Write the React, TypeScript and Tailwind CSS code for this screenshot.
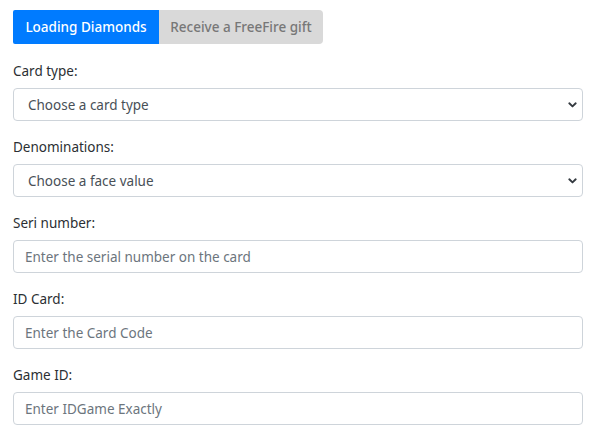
import React from "react";

const Chevron = () => (
  <svg width="9" height="7" viewBox="0 0 9 7" className="absolute right-[5px] top-1/2 -translate-y-1/2">
    <path d="M1.3 1.8 L4.5 4.9 L7.7 1.8" fill="none" stroke="#343a40" strokeWidth="1.9" strokeLinecap="round" strokeLinejoin="round" />
  </svg>
);

const SelectBox = ({ text }: { text: string }) => (
  <div className="relative h-[33px] w-full rounded-[4px] border border-[#ced4da] bg-white flex items-center pl-[14px] pt-[2px] text-[13.5px] text-[#495057]">
    {text}
    <Chevron />
  </div>
);

const InputBox = ({ text }: { text: string }) => (
  <div className="h-[33px] w-full rounded-[4px] border border-[#ced4da] bg-white flex items-center pl-[11px] pt-[2px] text-[13.5px] text-[#6c757d]">
    {text}
  </div>
);

const Group = ({ label, children }: { label: string; children: React.ReactNode }) => (
  <div className="mb-[15px]">
    <div className="h-[22px] leading-[22px] mb-[6px] text-[13.5px] text-[#2b2f33]">{label}</div>
    {children}
  </div>
);

export default function App() {
  return (
    <div
      className="w-[600px] h-[435px] bg-white overflow-hidden pl-[13px] pr-[17px] pt-[10px]"
      style={{ fontFamily: '"Noto Sans", "Open Sans", sans-serif' }}
    >
      <div className="flex mb-[16px]">
        <div className="w-[146px] h-[34px] bg-[#007bff] text-white flex items-center justify-center text-[13.5px] font-medium rounded-l-[2px]">
          Loading Diamonds
        </div>
        <div className="w-[164px] h-[34px] bg-[#d9d9d9] text-[#777777] flex items-center justify-center text-[13.5px] font-medium rounded-r-[4px]">
          Receive a FreeFire gift
        </div>
      </div>
      <Group label="Card type:">
        <SelectBox text="Choose a card type" />
      </Group>
      <Group label="Denominations:">
        <SelectBox text="Choose a face value" />
      </Group>
      <Group label="Seri number:">
        <InputBox text="Enter the serial number on the card" />
      </Group>
      <Group label="ID Card:">
        <InputBox text="Enter the Card Code" />
      </Group>
      <Group label="Game ID:">
        <InputBox text="Enter IDGame Exactly" />
      </Group>
    </div>
  );
}
